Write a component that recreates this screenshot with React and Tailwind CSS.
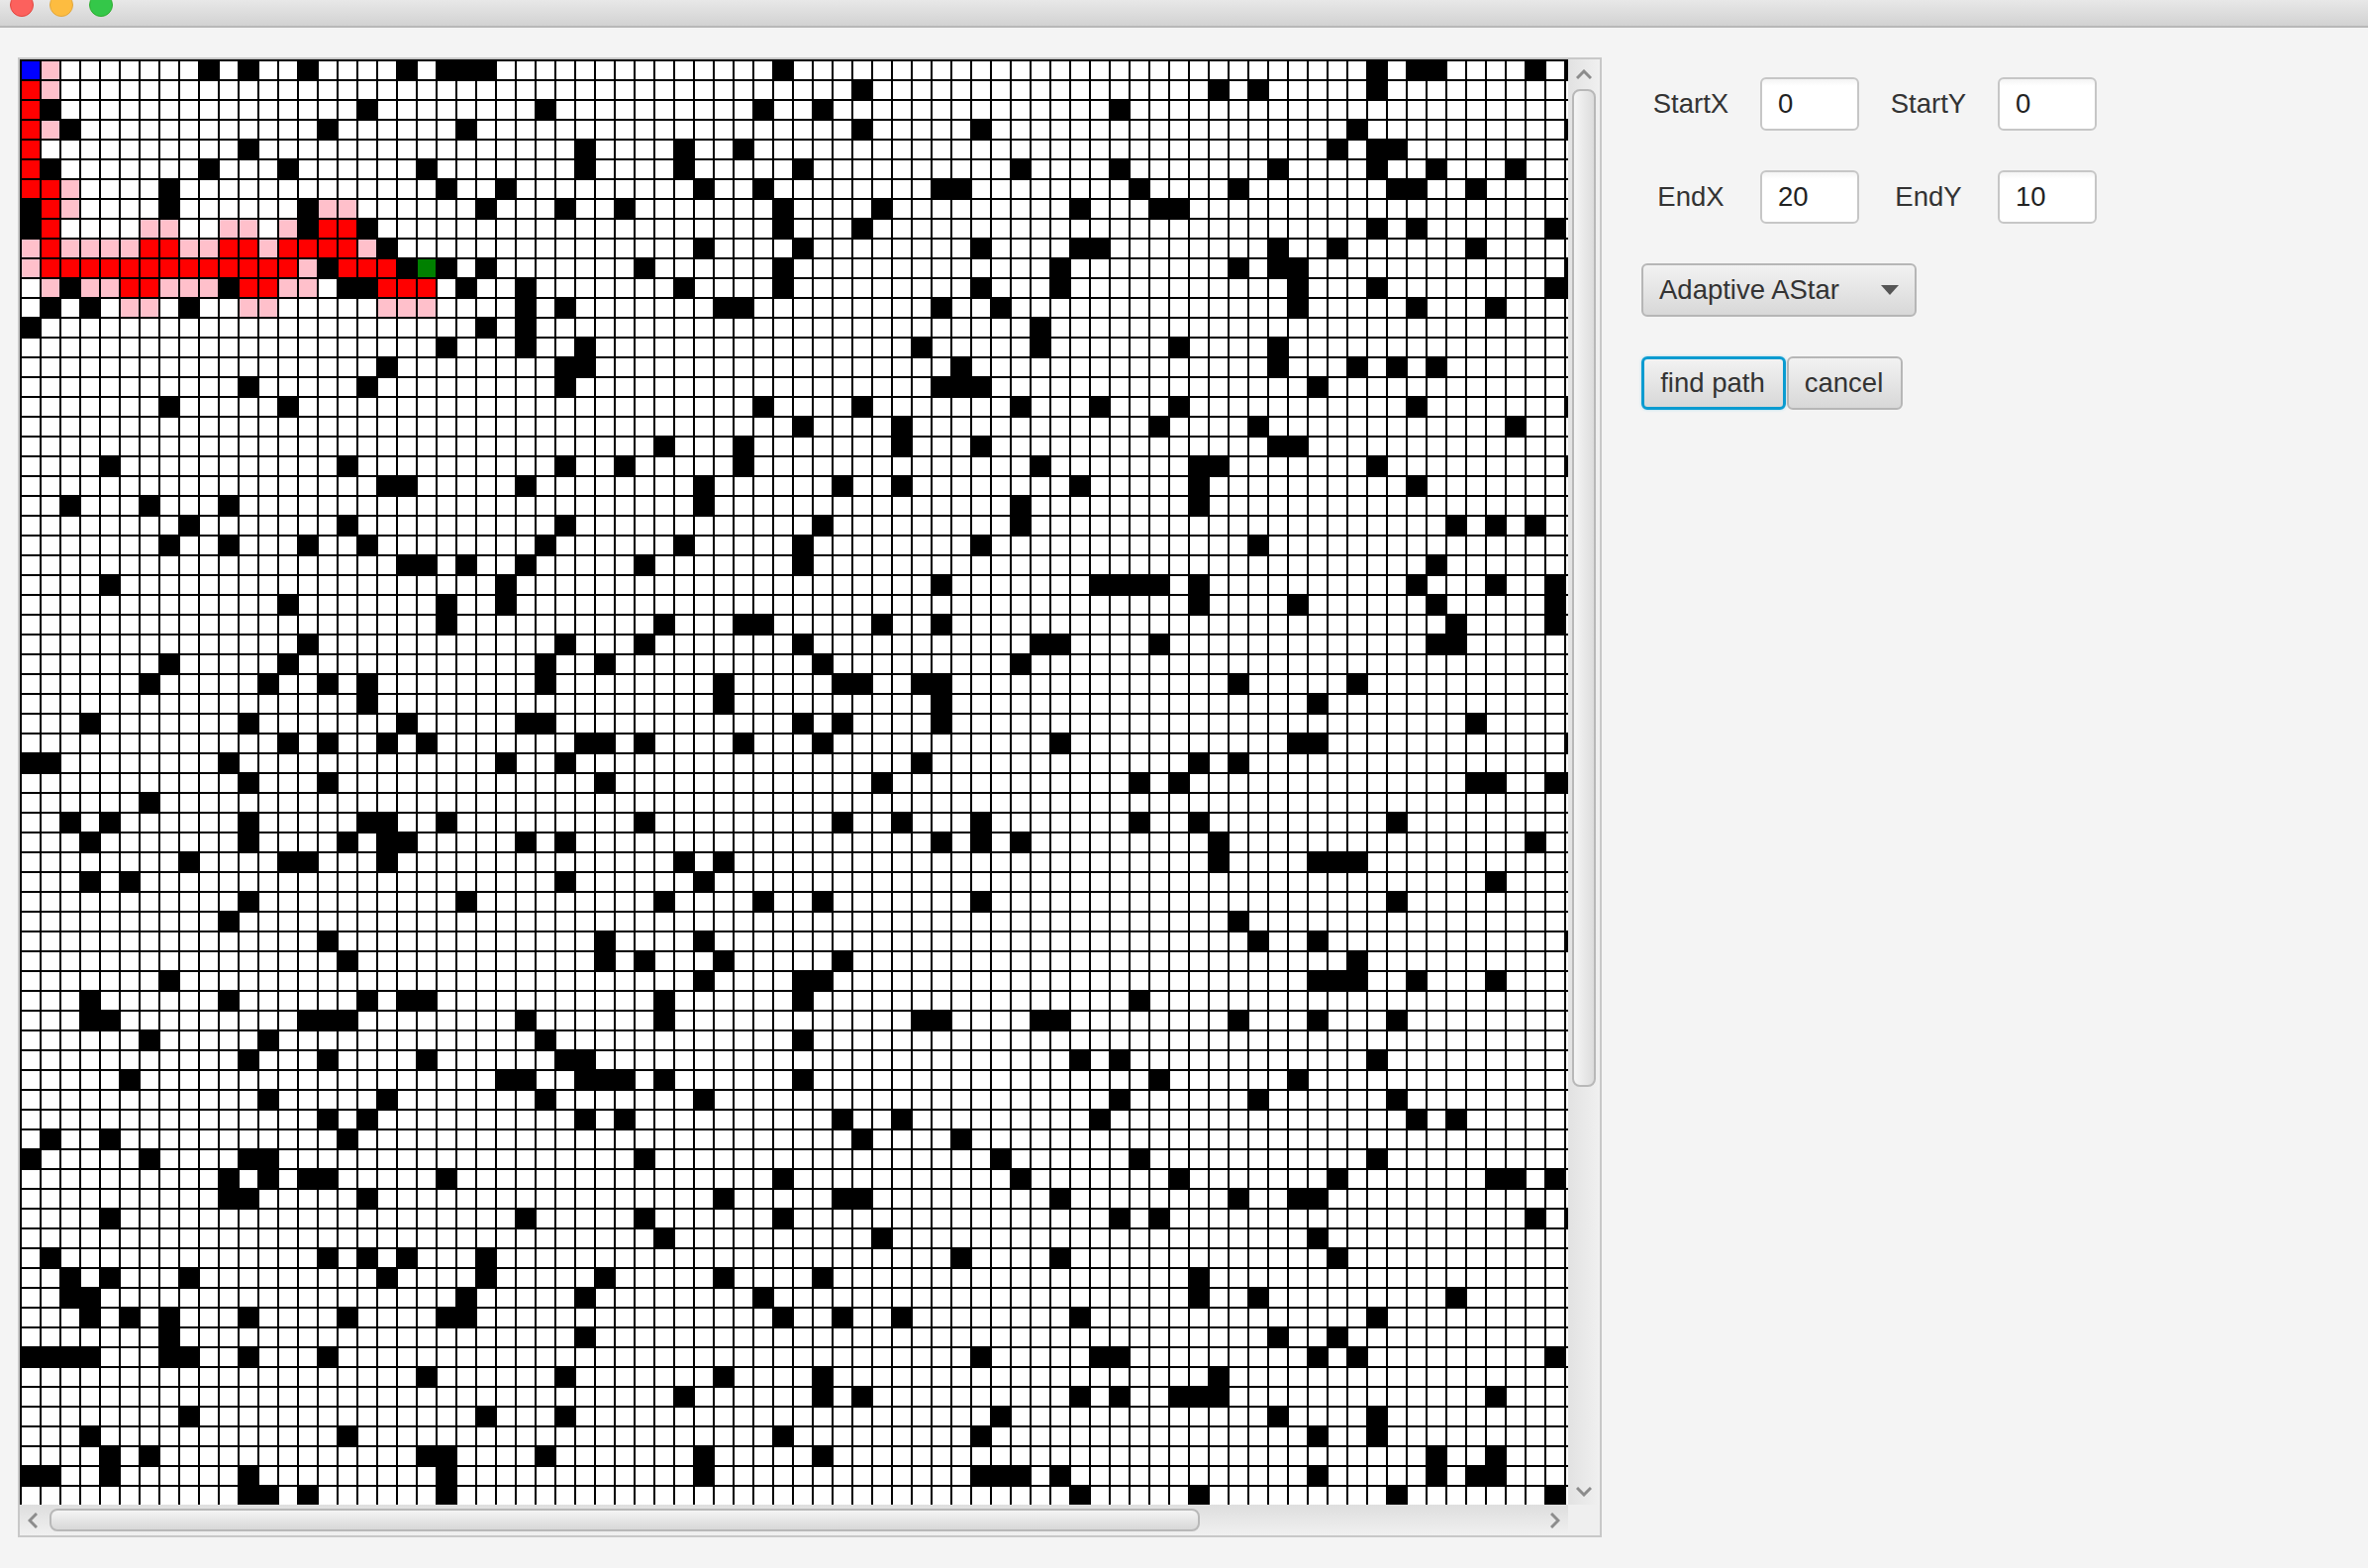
import React from "react";

// black cells per row (column indexes), read off the screenshot
const WALLS = [
  [9, 11, 14, 19, 21, 22, 23, 38, 68, 70, 71, 76, 78],
  [42, 60, 62, 68],
  [1, 17, 26, 37, 40, 55],
  [2, 15, 22, 42, 48, 67, 78],
  [11, 28, 33, 36, 66, 68, 69],
  [1, 9, 13, 20, 28, 33, 39, 50, 55, 63, 68, 71, 75],
  [7, 21, 24, 34, 37, 46, 47, 56, 61, 69, 70, 73],
  [0, 7, 14, 23, 27, 30, 38, 43, 53, 57, 58],
  [0, 14, 17, 38, 42, 68, 70, 77],
  [18, 34, 39, 48, 53, 54, 63, 66, 73],
  [15, 19, 21, 23, 31, 38, 52, 61, 63, 64, 78],
  [2, 10, 16, 17, 22, 25, 33, 38, 48, 52, 64, 68, 77, 78],
  [1, 3, 8, 25, 27, 35, 36, 46, 49, 64, 70, 74],
  [0, 23, 25, 51],
  [21, 25, 28, 45, 51, 58, 63],
  [18, 27, 28, 47, 63, 67, 69, 71],
  [11, 17, 27, 46, 47, 48, 65],
  [7, 13, 37, 42, 50, 54, 58, 70, 78],
  [39, 44, 57, 62, 75],
  [32, 36, 44, 48, 63, 64],
  [4, 16, 27, 30, 36, 51, 59, 60, 68, 78],
  [18, 19, 25, 34, 41, 44, 53, 59, 70],
  [2, 6, 10, 34, 50, 59],
  [8, 16, 27, 40, 50, 72, 74, 76],
  [7, 10, 14, 17, 26, 33, 39, 48, 62],
  [19, 20, 22, 25, 31, 39, 71],
  [4, 24, 46, 54, 55, 56, 57, 59, 70, 74, 77],
  [13, 21, 24, 59, 64, 71, 77],
  [21, 32, 36, 37, 43, 46, 72, 77],
  [14, 27, 31, 39, 51, 52, 57, 71, 72],
  [7, 13, 26, 29, 40, 50],
  [6, 12, 15, 17, 26, 35, 41, 42, 45, 46, 61, 67],
  [17, 35, 46, 65],
  [3, 11, 19, 25, 26, 39, 41, 46, 73],
  [13, 15, 18, 20, 28, 29, 31, 36, 40, 52, 64, 65, 78],
  [0, 1, 10, 24, 27, 45, 59, 61],
  [11, 15, 29, 43, 56, 58, 73, 74, 77, 78],
  [6],
  [2, 4, 11, 17, 18, 21, 31, 41, 44, 48, 56, 59, 69],
  [3, 11, 16, 18, 19, 25, 27, 46, 48, 50, 60, 76],
  [8, 13, 14, 18, 33, 35, 60, 65, 66, 67],
  [3, 5, 27, 34, 74],
  [11, 22, 32, 37, 40, 48, 69],
  [10, 61],
  [15, 29, 34, 62, 65, 78],
  [16, 29, 31, 35, 41, 67],
  [7, 34, 39, 40, 65, 66, 67, 70, 74],
  [3, 10, 17, 19, 20, 32, 39, 56],
  [3, 4, 14, 15, 16, 25, 32, 45, 46, 51, 52, 61, 65, 69],
  [6, 12, 26, 39],
  [11, 15, 20, 27, 28, 53, 55, 68],
  [5, 24, 25, 28, 29, 30, 32, 39, 57, 64],
  [12, 18, 26, 34, 55, 62, 69],
  [15, 17, 28, 30, 41, 44, 54, 70, 72],
  [1, 4, 16, 42, 47],
  [0, 6, 11, 12, 31, 49, 56, 68],
  [10, 12, 14, 15, 21, 38, 50, 58, 66, 74, 75, 77],
  [10, 11, 17, 35, 41, 42, 52, 61, 64, 65],
  [4, 25, 31, 38, 55, 57, 76, 78],
  [32, 43, 65],
  [1, 15, 17, 19, 23, 47, 52, 66],
  [2, 4, 8, 18, 23, 29, 35, 40, 59],
  [2, 3, 22, 28, 37, 59, 62, 72],
  [3, 5, 7, 11, 16, 21, 22, 38, 41, 44, 53, 68],
  [7, 28, 63, 66],
  [0, 1, 2, 3, 7, 8, 11, 15, 48, 54, 55, 65, 67, 77],
  [20, 27, 35, 40, 60],
  [33, 40, 42, 53, 55, 58, 59, 60, 74],
  [8, 23, 27, 49, 63, 68],
  [3, 16, 38, 48, 65, 68],
  [4, 6, 20, 21, 26, 34, 40, 71, 74],
  [0, 1, 4, 11, 21, 34, 48, 49, 50, 52, 65, 71, 73, 74],
  [11, 12, 14, 21, 53, 59, 69, 77],
];

const RED = {
  1: [0], 2: [0], 3: [0], 4: [0], 5: [0],
  6: [0, 1], 7: [1], 8: [1, 15, 16],
  9: [1, 6, 7, 10, 11, 13, 14, 15, 16],
  10: [1, 2, 3, 4, 5, 6, 7, 8, 9, 10, 11, 12, 13, 16, 17, 18],
  11: [5, 6, 11, 12, 18, 19, 20],
};

const PINK = {
  0: [1], 1: [1], 3: [1], 6: [2], 7: [2, 15, 16],
  8: [6, 7, 10, 11, 13],
  9: [0, 2, 3, 4, 5, 8, 9, 12, 17],
  10: [0, 14],
  11: [1, 3, 4, 7, 8, 9, 13, 14],
  12: [5, 6, 11, 12, 18, 19, 20],
};

const cellColor = (row, col) => {
  if (row === 0 && col === 0) return "bg-[#0000ff]";
  if (row === 10 && col === 20) return "bg-[#008000]";
  if (WALLS[row].includes(col)) return "bg-black";
  if (RED[row]?.includes(col)) return "bg-[#ff0000]";
  if (PINK[row]?.includes(col)) return "bg-[#ffc0cb]";
  return "bg-white";
};

const Chevron = ({ points, w, h }) => (
  <svg width={w} height={h} viewBox={`0 0 ${w} ${h}`} fill="none">
    <polyline points={points} stroke="#8c8c8c" strokeWidth="3" />
  </svg>
);

const Field = ({ label, value }) => (
  <>
    <div className="w-[100px] text-center">{label}</div>
    <div className="flex h-[54px] w-[100px] items-center rounded-[6px] border-2 border-[#c6c6c6] bg-gradient-to-b from-[#f4f4f4] to-white to-[14%] pl-4 text-[#222]">
      {value}
    </div>
  </>
);

const Grid = () => (
  <div className="h-[1460px] w-[1564px] overflow-hidden">
    <div className="grid w-[1564px] grid-cols-[repeat(78,18px)_2px] auto-rows-[18px] gap-[2px] bg-black pl-[2px] pt-[2px]">
      {WALLS.map((_, row) =>
        Array.from({ length: 79 }, (_, col) => (
          <div key={`${row}-${col}`} className={cellColor(row, col)} />
        ))
      )}
    </div>
  </div>
);

const App = () => {
  return (
    <div className="flex h-[1584px] w-[2392px] flex-col overflow-hidden bg-[#f4f4f4] font-['Liberation_Sans',Arial,sans-serif] text-[27.5px] text-[#333]">
      <div className="flex h-[28px] shrink-0 gap-4 overflow-hidden border-b-2 border-[#b8b8b8] bg-gradient-to-b from-[#e8e8e8] to-[#d2d2d2] pl-[10px]">
        <div className="-mt-[7px] h-6 w-6 rounded-full border border-[#e2463f] bg-[#fc615d]" />
        <div className="-mt-[7px] h-6 w-6 rounded-full border border-[#e1a73e] bg-[#fdbc40]" />
        <div className="-mt-[7px] h-6 w-6 rounded-full border border-[#2dac2f] bg-[#34c749]" />
      </div>

      <div className="flex items-start pl-[18px] pt-[30px]">
        <div className="flex w-[1600px] flex-col border-2 border-[#c8c8c8]">
          <div className="flex">
            <Grid />
            <div className="flex h-[1460px] w-[32px] flex-col items-center bg-gradient-to-r from-[#e2e2e2] to-[#f0f0f0]">
              <div className="flex h-[30px] shrink-0 items-center justify-center">
                <Chevron w={16} h={10} points="1,9 8,2 15,9" />
              </div>
              <div className="h-[1008px] w-[24px] shrink-0 rounded-[8px] border-2 border-[#b8b8b8] bg-gradient-to-r from-[#f6f6f6] to-[#dcdcdc]" />
              <div className="flex-1" />
              <div className="flex h-[30px] shrink-0 items-center justify-center pt-1">
                <Chevron w={16} h={10} points="1,1 8,8 15,1" />
              </div>
            </div>
          </div>
          <div className="flex h-[31px]">
            <div className="flex h-full w-[1564px] items-center bg-gradient-to-b from-[#dedede] to-[#f0f0f0]">
              <div className="flex w-[30px] justify-center pr-1">
                <Chevron w={10} h={16} points="9,1 2,8 9,15" />
              </div>
              <div className="h-[23px] w-[1162px] rounded-[8px] border-2 border-[#b8b8b8] bg-gradient-to-b from-[#f4f4f4] to-[#d8d8d8]" />
              <div className="flex-1" />
              <div className="flex w-[30px] justify-center pl-1">
                <Chevron w={10} h={16} points="1,1 8,8 1,15" />
              </div>
            </div>
            <div className="w-[32px] bg-[#efefef]" />
          </div>
        </div>

        <div className="flex flex-col gap-[40px] pl-[40px] pt-[20px]">
          <div className="flex items-center gap-[20px]">
            <Field label="StartX" value="0" />
            <Field label="StartY" value="0" />
          </div>
          <div className="flex items-center gap-[20px]">
            <Field label="EndX" value="20" />
            <Field label="EndY" value="10" />
          </div>
          <div className="flex h-[54px] w-[278px] items-center justify-between rounded-[6px] border-2 border-[#b6b6b6] bg-gradient-to-b from-[#f2f2f2] to-[#d8d8d8] pl-4 pr-4">
            <span>Adaptive AStar</span>
            <svg width="18" height="10" viewBox="0 0 18 10">
              <polygon points="0,0 18,0 9,10" fill="#555555" />
            </svg>
          </div>
          <div className="flex gap-[1px]">
            <div className="flex h-[54px] w-[146px] items-center justify-center rounded-[6px] border-[3px] border-[#0a9bd0] bg-gradient-to-b from-[#f2f2f2] to-[#d8d8d8] pr-[2px] shadow-[0_0_3px_#9fd8ee]">
              find path
            </div>
            <div className="flex h-[54px] w-[117px] items-center justify-center rounded-[6px] border-2 border-[#b6b6b6] bg-gradient-to-b from-[#f2f2f2] to-[#d8d8d8] pr-[2px]">
              cancel
            </div>
          </div>
        </div>
      </div>
    </div>
  );
};

export default App;
